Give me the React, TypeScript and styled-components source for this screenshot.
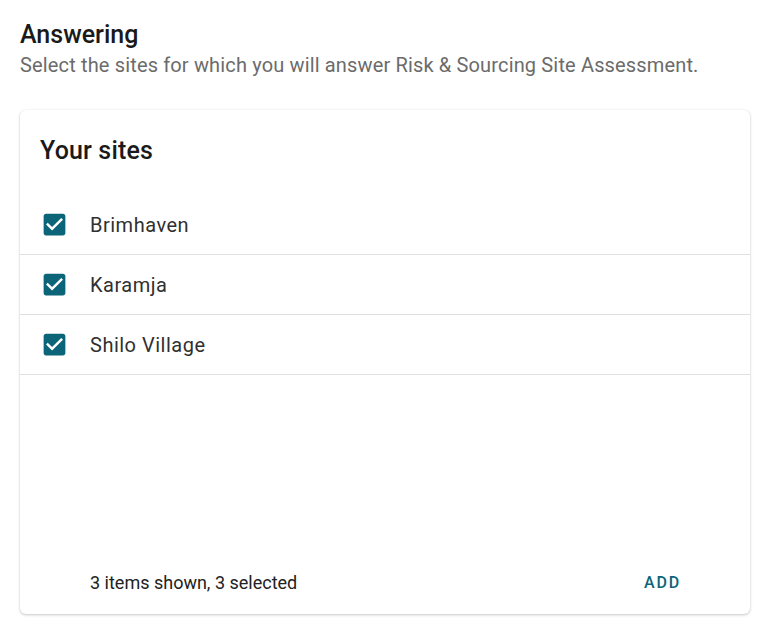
import React from "react";
import styled, { createGlobalStyle } from "styled-components";

const GlobalStyle = createGlobalStyle`
  body {
    margin: 0;
    background: #ffffff;
    font-family: Roboto, "Liberation Sans", sans-serif;
  }
`;

const Page = styled.div`
  padding: 20px 23px 18px 20px;
`;

const Title = styled.h1`
  margin: 0;
  font-size: 25px;
  line-height: 30px;
  font-weight: 500;
  color: #1a1a1a;
`;

const Subtitle = styled.p`
  margin: 0;
  font-size: 20px;
  line-height: 30px;
  letter-spacing: 0.15px;
  color: #6b6b6b;
`;

const Card = styled.section`
  margin-top: 30px;
  height: 504px;
  display: flex;
  flex-direction: column;
  background: #fff;
  border-radius: 6px;
  box-shadow: 0 1px 3px rgba(0, 0, 0, 0.22), 0 0 1px rgba(0, 0, 0, 0.08);
`;

const CardTitle = styled.h2`
  margin: 0;
  padding: 25px 20px 0 20px;
  height: 60px;
  font-size: 25px;
  line-height: 32px;
  font-weight: 500;
  letter-spacing: 0.15px;
  color: #1a1a1a;
`;

const List = styled.ul`
  list-style: none;
  margin: 0;
  padding: 0;
  flex: 1;
`;

const Row = styled.li`
  height: 60px;
  display: flex;
  align-items: center;
  padding-left: 20px;
  gap: 21px;
  border-bottom: 1px solid #e0e0e0;
  box-sizing: border-box;
`;

const CheckIcon = styled.svg`
  width: 29px;
  height: 29px;
  flex: none;
  fill: #0c6479;
`;

const Label = styled.span`
  font-size: 20px;
  letter-spacing: 0.5px;
  color: #303030;
`;

const Footer = styled.div`
  height: 63px;
  display: flex;
  align-items: center;
  justify-content: space-between;
  padding: 0 71px 0 70px;
`;

const Count = styled.span`
  font-size: 18px;
  color: #222;
`;

const AddButton = styled.button`
  border: none;
  background: none;
  font-family: inherit;
  font-size: 16px;
  font-weight: 500;
  letter-spacing: 1.8px;
  color: #0c6479;
  padding: 6px 0;
  margin-right: -2px;
  cursor: pointer;
`;

const sites = ["Brimhaven", "Karamja", "Shilo Village"];

const Checkbox = () => (
  <CheckIcon viewBox="0 0 24 24">
    <path d="M19 3H5c-1.11 0-2 .9-2 2v14c0 1.1.89 2 2 2h14c1.11 0 2-.9 2-2V5c0-1.1-.89-2-2-2zm-9 14l-5-5 1.41-1.41L10 14.17l7.59-7.59L19 8l-9 9z" />
  </CheckIcon>
);

export default function App() {
  return (
    <Page>
      <GlobalStyle />
      <Title>Answering</Title>
      <Subtitle>Select the sites for which you will answer Risk &amp; Sourcing Site Assessment.</Subtitle>
      <Card>
        <CardTitle>Your sites</CardTitle>
        <List>
          {sites.map((s) => (
            <Row key={s}>
              <Checkbox />
              <Label>{s}</Label>
            </Row>
          ))}
        </List>
        <Footer>
          <Count>3 items shown, 3 selected</Count>
          <AddButton>ADD</AddButton>
        </Footer>
      </Card>
    </Page>
  );
}
